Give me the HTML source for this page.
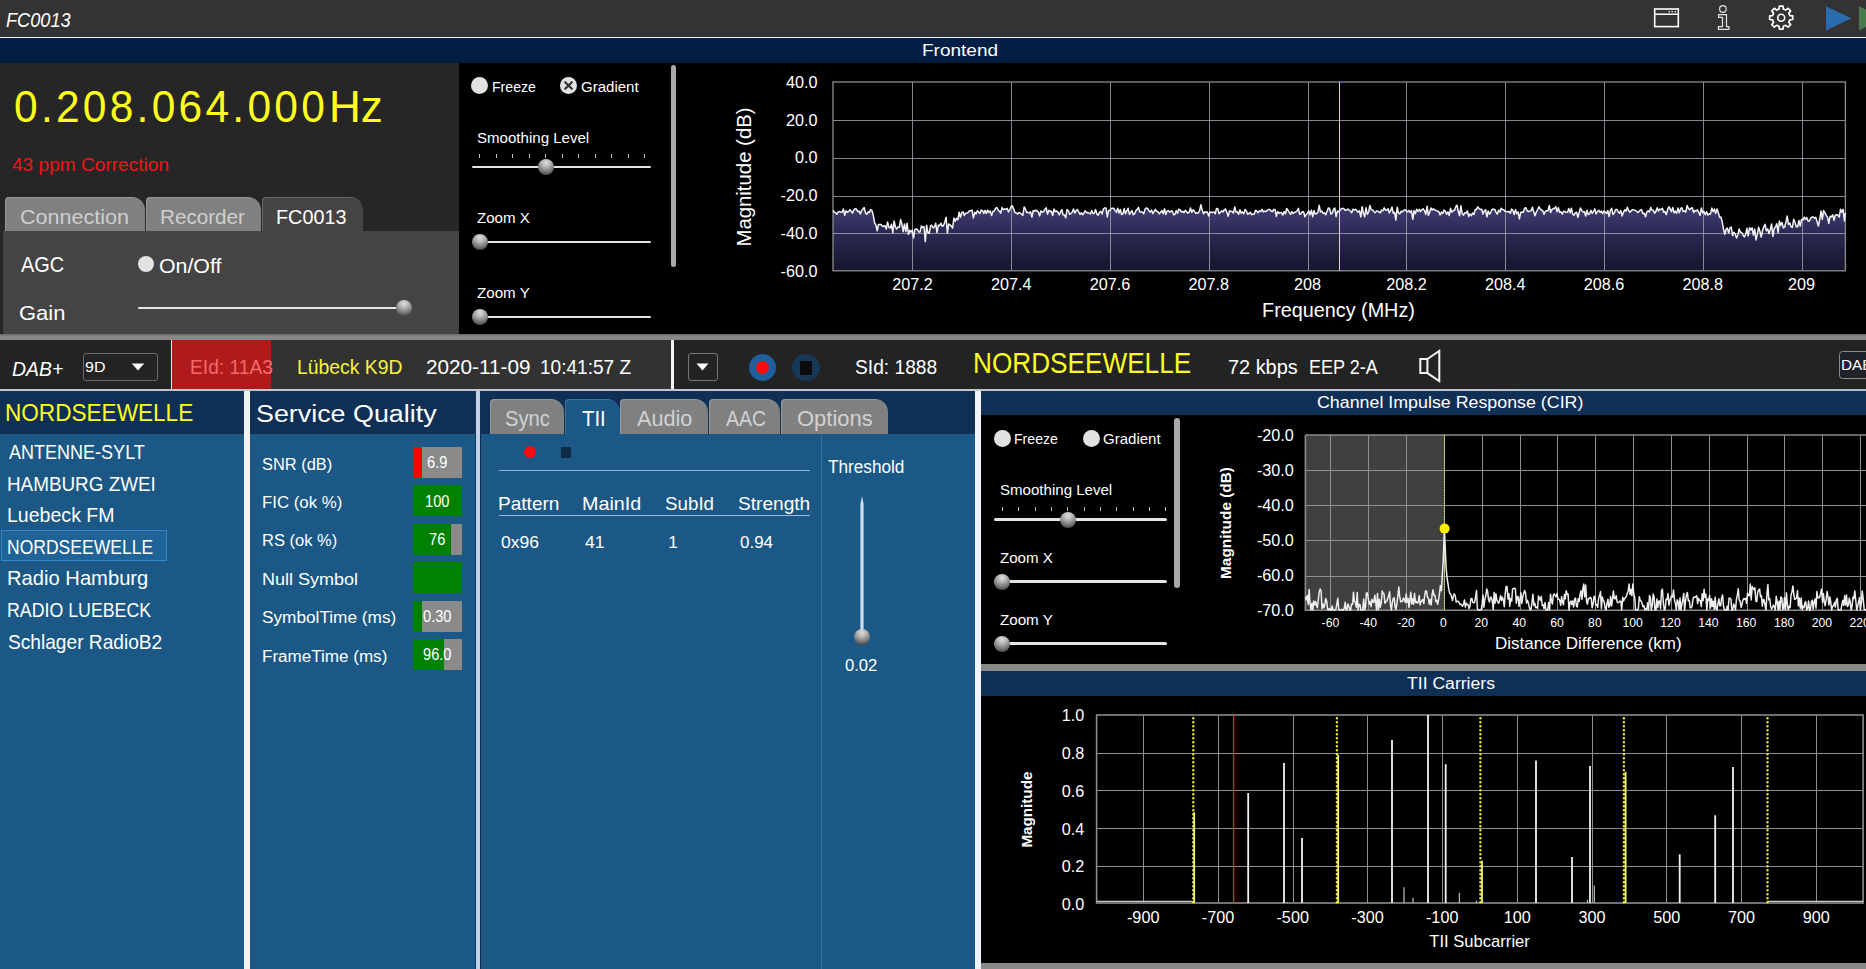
<!DOCTYPE html>
<html lang="en"><head><meta charset="utf-8"><title>FC0013 - DAB+ Receiver</title>
<style>
html,body{margin:0;padding:0;background:#1b5885;}
body{width:1866px;height:969px;position:relative;overflow:hidden;font-family:"Liberation Sans",sans-serif;color:#fff;}
.p{position:absolute;overflow:hidden;}
.b{position:absolute;}
.b svg{display:block;}
.t{position:absolute;white-space:pre;line-height:1;transform-origin:0 50%;color:#fff;}
svg{position:absolute;overflow:hidden;}
svg text{font-family:"Liberation Sans",sans-serif;fill:#fff;}
.tab{position:absolute;background:#808080;border-radius:4px 13px 0 0;box-shadow:inset 1px 1px 0 rgba(255,255,255,.18);}
</style></head><body>

<header class="p" style="left:0;top:0;width:1866px;height:37px;background:#333333">
<span class="t" style="left:6.45px;top:10.00px;font-size:20.25px;transform:scaleX(0.8979);font-style:italic">FC0013</span>
<svg style="left:1650px;top:4px" width="216" height="30" viewBox="1650 4 216 30" fill="none" stroke="#fff">
<rect x="1654.7" y="9" width="23.6" height="17.6" stroke-width="1.6"/>
<path d="M1655 14.2H1678" stroke-width="1.5"/><path d="M1668.5 11.6h1.4M1671.5 11.6h1.4M1674.5 11.6h1.4" stroke-width="1.3"/>
<circle cx="1722.9" cy="9" r="3.3" stroke-width="1.2" stroke="#e4e4e4"/>
<path d="M1718.6 14.6H1726.5V26.6H1729V29.3H1718.4V26.6H1722.5V17.4H1718.6Z" stroke-width="1.2" stroke="#e4e4e4" stroke-linejoin="round"/>
<circle cx="1781.2" cy="17.7" r="3.5" stroke-width="1.6"/>
<path id="gear" stroke-width="1.7" stroke-linejoin="round" d="M1779.38 6.19 L1783.02 6.19 L1783.35 9.06 L1785.79 10.08 L1788.05 8.27 L1790.63 10.85 L1788.82 13.11 L1789.84 15.55 L1792.71 15.88 L1792.71 19.52 L1789.84 19.85 L1788.82 22.29 L1790.63 24.55 L1788.05 27.13 L1785.79 25.32 L1783.35 26.34 L1783.02 29.21 L1779.38 29.21 L1779.05 26.34 L1776.61 25.32 L1774.35 27.13 L1771.77 24.55 L1773.58 22.29 L1772.56 19.85 L1769.69 19.52 L1769.69 15.88 L1772.56 15.55 L1773.58 13.11 L1771.77 10.85 L1774.35 8.27 L1776.61 10.08 L1779.05 9.06Z"/>
<path d="M1826 6.3 L1851.5 18.3 L1826 30.4Z" fill="#2a6cb0" stroke="none"/>
<path d="M1859 6.3 L1884.5 18.3 L1859 30.4Z" fill="#4b7a4f" stroke="none"/>
</svg>
</header>
<div class="b" style="left:0.00px;top:37.00px;width:1866.00px;height:1.00px;background:#f4f8ff"></div>
<div class="p" style="left:0;top:38px;width:1866px;height:25px;background:linear-gradient(#022148,#021c3f)">
<span class="t" style="left:922.18px;top:4.00px;font-size:17.25px;transform:scaleX(1.1008)">Frontend</span>
</div>
<section class="p" style="left:0;top:63px;width:459px;height:271px;background:#262626">
<span class="t" style="left:14.01px;top:21px;font-size:45.00px;letter-spacing:3.43px;color:#ffff1e;transform:scaleX(0.945)">0.208.064.000</span>
<span class="t" style="left:329.48px;top:21.00px;font-size:45.00px;transform:scaleX(0.9786);color:#ffff1e">Hz</span>
<span class="t" style="left:12.12px;top:93.00px;font-size:18.25px;transform:scaleX(1.0461);color:#f01418">43 ppm Correction</span>
<div class="tab" style="left:5px;top:134px;width:139.5px;height:34px"></div>
<div class="tab" style="left:146px;top:134px;width:114.5px;height:34px"></div>
<div class="tab" style="left:262px;top:134px;width:101px;height:34px;background:#444444"></div>
<span class="t" style="left:20.42px;top:143.00px;font-size:21.00px;transform:scaleX(1.0245);color:#cfcfcf">Connection</span>
<span class="t" style="left:160.35px;top:143.00px;font-size:21.00px;transform:scaleX(0.9832);color:#cfcfcf">Recorder</span>
<span class="t" style="left:276.42px;top:143.00px;font-size:21.00px;transform:scaleX(0.9427)">FC0013</span>
<div class="b" style="left:3.00px;top:168.00px;width:456.00px;height:103.00px;background:#444444"></div>
<span class="t" style="left:20.50px;top:191.00px;font-size:21.75px;transform:scaleX(0.9174)">AGC</span>
<div class="b" style="left:137.75px;top:192.75px;width:16.50px;height:16.50px;background:#e2e2e2;border-radius:50%"></div>
<span class="t" style="left:158.54px;top:192.00px;font-size:21.00px;transform:scaleX(1.0151)">On/Off</span>
<span class="t" style="left:19.40px;top:239.00px;font-size:21.00px;transform:scaleX(1.0476)">Gain</span>
<div class="b" style="left:138.00px;top:243.55px;width:266.00px;height:2.90px;background:#e4e4e4;border-radius:2px"></div><div class="b thumb" style="left:396.00px;top:237.00px;width:16.00px;height:16.00px;background:radial-gradient(circle at 50% 22%,#dedede 0%,#b6b6b6 30%,#808080 58%,#4a4a4a 84%,#343434 100%);border-radius:50%"></div>
</section>
<section class="p" style="left:459px;top:63px;width:1407px;height:271px;background:#000">
<div class="b" style="left:12.00px;top:14.10px;width:17.00px;height:17.00px;background:#e2e2e2;border-radius:50%"></div>
<span class="t" style="left:32.87px;top:16.00px;font-size:15.00px;transform:scaleX(0.9409)">Freeze</span>
<div class="b" style="left:101.00px;top:14.10px;width:17.00px;height:17.00px;background:#e2e2e2;border-radius:50%"><svg width="17" height="17" viewBox="0 0 17 17"><path d="M5.2 5.2 L11.8 11.8 M11.8 5.2 L5.2 11.8" stroke="#333" stroke-width="2.2" stroke-linecap="round" fill="none"/></svg></div>
<span class="t" style="left:122.25px;top:16.00px;font-size:15.00px;transform:scaleX(1.0018)">Gradient</span>
<span class="t" style="left:17.82px;top:67.00px;font-size:15.00px;transform:scaleX(1.0043)">Smoothing Level</span>
<div class="b" style="left:20.00px;top:91.00px;width:1.00px;height:4.00px;background:#bdbdbd"></div><div class="b" style="left:36.50px;top:91.00px;width:1.00px;height:4.00px;background:#bdbdbd"></div><div class="b" style="left:53.00px;top:91.00px;width:1.00px;height:4.00px;background:#bdbdbd"></div><div class="b" style="left:69.50px;top:91.00px;width:1.00px;height:4.00px;background:#bdbdbd"></div><div class="b" style="left:86.00px;top:91.00px;width:1.00px;height:4.00px;background:#bdbdbd"></div><div class="b" style="left:102.50px;top:91.00px;width:1.00px;height:4.00px;background:#bdbdbd"></div><div class="b" style="left:119.00px;top:91.00px;width:1.00px;height:4.00px;background:#bdbdbd"></div><div class="b" style="left:135.50px;top:91.00px;width:1.00px;height:4.00px;background:#bdbdbd"></div><div class="b" style="left:152.00px;top:91.00px;width:1.00px;height:4.00px;background:#bdbdbd"></div><div class="b" style="left:168.50px;top:91.00px;width:1.00px;height:4.00px;background:#bdbdbd"></div><div class="b" style="left:185.00px;top:91.00px;width:1.00px;height:4.00px;background:#bdbdbd"></div><div class="b" style="left:13.00px;top:102.55px;width:178.50px;height:2.90px;background:#e4e4e4;border-radius:2px"></div><div class="b thumb" style="left:78.70px;top:96.00px;width:16.00px;height:16.00px;background:radial-gradient(circle at 50% 22%,#dedede 0%,#b6b6b6 30%,#808080 58%,#4a4a4a 84%,#343434 100%);border-radius:50%"></div>
<span class="t" style="left:18.05px;top:147.00px;font-size:15.00px;transform:scaleX(1.0048)">Zoom X</span>
<div class="b" style="left:13.00px;top:177.55px;width:178.50px;height:2.90px;background:#e4e4e4;border-radius:2px"></div><div class="b thumb" style="left:13.00px;top:171.00px;width:16.00px;height:16.00px;background:radial-gradient(circle at 50% 22%,#dedede 0%,#b6b6b6 30%,#808080 58%,#4a4a4a 84%,#343434 100%);border-radius:50%"></div>
<span class="t" style="left:18.05px;top:222.00px;font-size:15.00px;transform:scaleX(1.0107)">Zoom Y</span>
<div class="b" style="left:13.00px;top:252.55px;width:178.50px;height:2.90px;background:#e4e4e4;border-radius:2px"></div><div class="b thumb" style="left:13.00px;top:246.00px;width:16.00px;height:16.00px;background:radial-gradient(circle at 50% 22%,#dedede 0%,#b6b6b6 30%,#808080 58%,#4a4a4a 84%,#343434 100%);border-radius:50%"></div>
<div class="b" style="left:211.50px;top:1.50px;width:5.50px;height:202.50px;background:#a9a9a9;border-radius:3px"></div>
<svg style="left:221px;top:0" width="1186" height="271" viewBox="680 63 1186 271">
<defs><linearGradient id="sg" gradientUnits="userSpaceOnUse" x1="0" y1="200" x2="0" y2="271"><stop offset="0" stop-color="#45437a"/><stop offset="0.45" stop-color="#2b2a55"/><stop offset="1" stop-color="#15152c"/></linearGradient></defs>
<path d="M833.0,270.8 L833.0,210.4 L834.3,212.2 L835.6,212.9 L836.9,214.2 L838.2,211.9 L839.5,211.4 L840.8,212.2 L842.1,212.1 L843.4,209.0 L844.7,215.4 L846.0,210.7 L847.3,212.2 L848.6,211.6 L849.9,209.7 L851.2,211.2 L852.5,213.1 L853.8,210.0 L855.1,208.8 L856.4,209.1 L857.7,211.6 L859.0,211.1 L860.3,214.0 L861.6,210.8 L862.9,209.1 L864.2,207.6 L865.5,212.9 L866.8,214.3 L868.1,211.8 L869.4,212.4 L870.7,209.6 L872.0,210.5 L873.3,215.4 L874.6,222.8 L875.9,225.0 L877.2,230.8 L878.5,224.5 L879.8,224.6 L881.1,224.5 L882.4,226.2 L883.7,226.2 L885.0,225.7 L886.3,229.1 L887.6,221.9 L888.9,227.4 L890.2,228.0 L891.5,224.3 L892.8,232.7 L894.1,221.0 L895.4,227.0 L896.7,229.2 L898.0,226.9 L899.3,227.3 L900.6,219.6 L901.9,223.8 L903.2,231.7 L904.5,223.9 L905.8,231.6 L907.1,223.2 L908.4,234.5 L909.7,230.3 L911.0,232.0 L912.3,230.1 L913.6,238.0 L914.9,229.4 L916.2,229.0 L917.5,229.5 L918.8,232.1 L920.1,231.9 L921.4,225.9 L922.7,227.4 L924.0,226.6 L925.3,241.8 L926.6,225.2 L927.9,232.6 L929.2,233.4 L930.5,225.8 L931.8,225.2 L933.1,228.0 L934.4,226.9 L935.7,223.3 L937.0,232.6 L938.3,225.3 L939.6,225.6 L940.9,223.2 L942.2,226.3 L943.5,225.5 L944.8,222.2 L946.1,217.2 L947.4,233.1 L948.7,224.0 L950.0,224.8 L951.3,226.1 L952.6,228.1 L953.9,218.1 L955.2,221.2 L956.5,218.4 L957.8,219.8 L959.1,212.2 L960.4,217.3 L961.7,212.6 L963.0,211.8 L964.3,215.4 L965.6,213.2 L966.9,213.0 L968.2,212.4 L969.5,210.7 L970.8,210.7 L972.1,210.1 L973.4,217.9 L974.7,212.3 L976.0,214.0 L977.3,210.7 L978.6,212.1 L979.9,213.4 L981.2,210.1 L982.5,210.7 L983.8,213.4 L985.1,210.4 L986.4,213.5 L987.7,210.1 L989.0,212.5 L990.3,210.9 L991.6,215.5 L992.9,211.5 L994.2,210.9 L995.5,208.4 L996.8,207.5 L998.1,209.9 L999.4,211.3 L1000.7,213.1 L1002.0,207.6 L1003.3,209.7 L1004.6,209.0 L1005.9,209.3 L1007.2,208.4 L1008.5,211.9 L1009.8,209.5 L1011.1,206.5 L1012.4,205.9 L1013.7,209.0 L1015.0,212.8 L1016.3,212.7 L1017.6,214.1 L1018.9,212.5 L1020.2,213.1 L1021.5,214.0 L1022.8,215.5 L1024.1,207.0 L1025.4,208.9 L1026.7,212.6 L1028.0,212.3 L1029.3,213.1 L1030.6,211.7 L1031.9,217.1 L1033.2,210.6 L1034.5,211.2 L1035.8,210.2 L1037.1,210.9 L1038.4,212.1 L1039.7,215.9 L1041.0,210.8 L1042.3,212.2 L1043.6,211.7 L1044.9,209.4 L1046.2,207.8 L1047.5,214.2 L1048.8,210.2 L1050.1,211.4 L1051.4,211.3 L1052.7,215.5 L1054.0,209.0 L1055.3,211.6 L1056.6,210.9 L1057.9,212.2 L1059.2,214.9 L1060.5,211.9 L1061.8,209.7 L1063.1,214.7 L1064.4,214.9 L1065.7,217.8 L1067.0,209.6 L1068.3,210.5 L1069.6,214.3 L1070.9,213.6 L1072.2,212.2 L1073.5,209.0 L1074.8,213.1 L1076.1,210.8 L1077.4,209.5 L1078.7,211.8 L1080.0,214.4 L1081.3,212.6 L1082.6,214.8 L1083.9,213.2 L1085.2,210.7 L1086.5,212.7 L1087.8,212.4 L1089.1,213.1 L1090.4,213.9 L1091.7,210.5 L1093.0,213.7 L1094.3,213.0 L1095.6,209.5 L1096.9,214.0 L1098.2,215.1 L1099.5,212.2 L1100.8,211.3 L1102.1,214.0 L1103.4,209.0 L1104.7,207.9 L1106.0,207.9 L1107.3,216.9 L1108.6,210.6 L1109.9,210.5 L1111.2,208.4 L1112.5,208.3 L1113.8,208.3 L1115.1,210.6 L1116.4,212.4 L1117.7,208.3 L1119.0,213.0 L1120.3,209.4 L1121.6,214.5 L1122.9,213.7 L1124.2,208.6 L1125.5,213.7 L1126.8,211.0 L1128.1,208.3 L1129.4,214.4 L1130.7,212.5 L1132.0,210.6 L1133.3,214.7 L1134.6,213.7 L1135.9,210.6 L1137.2,209.4 L1138.5,207.4 L1139.8,212.1 L1141.1,211.6 L1142.4,212.2 L1143.7,213.8 L1145.0,209.3 L1146.3,207.9 L1147.6,208.4 L1148.9,210.7 L1150.2,212.2 L1151.5,210.1 L1152.8,213.5 L1154.1,211.3 L1155.4,209.3 L1156.7,211.6 L1158.0,211.7 L1159.3,213.9 L1160.6,212.2 L1161.9,210.6 L1163.2,213.7 L1164.5,208.7 L1165.8,214.5 L1167.1,211.0 L1168.4,210.6 L1169.7,212.2 L1171.0,211.1 L1172.3,210.9 L1173.6,214.8 L1174.9,214.6 L1176.2,210.5 L1177.5,213.2 L1178.8,209.2 L1180.1,209.8 L1181.4,212.0 L1182.7,211.3 L1184.0,212.6 L1185.3,210.3 L1186.6,211.8 L1187.9,213.1 L1189.2,212.2 L1190.5,208.0 L1191.8,212.4 L1193.1,209.9 L1194.4,211.1 L1195.7,213.4 L1197.0,212.8 L1198.3,212.9 L1199.6,210.6 L1200.9,204.7 L1202.2,210.1 L1203.5,213.8 L1204.8,211.8 L1206.1,212.3 L1207.4,211.9 L1208.7,215.9 L1210.0,212.0 L1211.3,212.2 L1212.6,212.4 L1213.9,211.9 L1215.2,213.9 L1216.5,208.5 L1217.8,208.8 L1219.1,213.8 L1220.4,212.2 L1221.7,210.8 L1223.0,212.0 L1224.3,209.8 L1225.6,209.0 L1226.9,212.5 L1228.2,216.2 L1229.5,210.7 L1230.8,211.5 L1232.1,211.5 L1233.4,213.1 L1234.7,207.0 L1236.0,212.0 L1237.3,211.8 L1238.6,214.4 L1239.9,209.7 L1241.2,213.3 L1242.5,211.8 L1243.8,213.9 L1245.1,209.4 L1246.4,211.0 L1247.7,214.3 L1249.0,213.5 L1250.3,212.2 L1251.6,214.7 L1252.9,214.1 L1254.2,214.2 L1255.5,210.2 L1256.8,211.2 L1258.1,212.7 L1259.4,210.8 L1260.7,211.5 L1262.0,209.4 L1263.3,211.9 L1264.6,211.1 L1265.9,211.6 L1267.2,210.4 L1268.5,209.6 L1269.8,209.4 L1271.1,211.0 L1272.4,211.7 L1273.7,209.5 L1275.0,209.4 L1276.3,216.4 L1277.6,211.4 L1278.9,213.4 L1280.2,212.4 L1281.5,212.8 L1282.8,215.0 L1284.1,211.6 L1285.4,213.8 L1286.7,208.5 L1288.0,210.3 L1289.3,212.3 L1290.6,214.3 L1291.9,211.7 L1293.2,213.4 L1294.5,212.2 L1295.8,212.1 L1297.1,210.7 L1298.4,208.3 L1299.7,214.3 L1301.0,213.5 L1302.3,211.8 L1303.6,211.8 L1304.9,216.7 L1306.2,214.6 L1307.5,213.0 L1308.8,210.8 L1310.1,214.8 L1311.4,210.2 L1312.7,216.7 L1314.0,210.6 L1315.3,214.1 L1316.6,213.8 L1317.9,212.3 L1319.2,205.3 L1320.5,211.9 L1321.8,211.0 L1323.1,213.4 L1324.4,212.7 L1325.7,214.8 L1327.0,211.4 L1328.3,207.9 L1329.6,208.4 L1330.9,214.1 L1332.2,213.2 L1333.5,209.3 L1334.8,208.0 L1336.1,216.7 L1337.4,210.9 L1338.7,212.0 L1340.0,210.4 L1341.3,208.6 L1342.6,208.5 L1343.9,208.6 L1345.2,210.4 L1346.5,210.0 L1347.8,209.0 L1349.1,210.1 L1350.4,211.0 L1351.7,212.7 L1353.0,209.2 L1354.3,210.0 L1355.6,209.3 L1356.9,210.9 L1358.2,212.1 L1359.5,210.9 L1360.8,216.9 L1362.1,206.7 L1363.4,213.3 L1364.7,216.7 L1366.0,207.8 L1367.3,214.3 L1368.6,212.0 L1369.9,205.5 L1371.2,209.8 L1372.5,209.9 L1373.8,211.5 L1375.1,212.7 L1376.4,211.1 L1377.7,211.3 L1379.0,211.8 L1380.3,212.8 L1381.6,210.2 L1382.9,210.8 L1384.2,207.9 L1385.5,210.0 L1386.8,210.2 L1388.1,208.8 L1389.4,212.9 L1390.7,210.4 L1392.0,207.0 L1393.3,213.3 L1394.6,212.2 L1395.9,220.1 L1397.2,207.2 L1398.5,213.0 L1399.8,213.9 L1401.1,211.3 L1402.4,211.8 L1403.7,210.5 L1405.0,209.7 L1406.3,211.0 L1407.6,212.0 L1408.9,210.5 L1410.2,212.5 L1411.5,210.7 L1412.8,219.3 L1414.1,210.6 L1415.4,213.6 L1416.7,209.2 L1418.0,211.4 L1419.3,209.4 L1420.6,211.7 L1421.9,209.7 L1423.2,208.8 L1424.5,210.7 L1425.8,214.5 L1427.1,206.2 L1428.4,215.3 L1429.7,212.0 L1431.0,207.9 L1432.3,210.0 L1433.6,208.9 L1434.9,209.8 L1436.2,210.5 L1437.5,211.2 L1438.8,211.4 L1440.1,214.9 L1441.4,212.1 L1442.7,213.4 L1444.0,210.1 L1445.3,211.4 L1446.6,214.2 L1447.9,211.8 L1449.2,215.5 L1450.5,208.3 L1451.8,212.2 L1453.1,210.6 L1454.4,210.5 L1455.7,206.8 L1457.0,205.2 L1458.3,211.3 L1459.6,215.7 L1460.9,205.8 L1462.2,213.7 L1463.5,215.1 L1464.8,212.7 L1466.1,213.1 L1467.4,210.8 L1468.7,216.5 L1470.0,213.9 L1471.3,215.6 L1472.6,213.0 L1473.9,214.5 L1475.2,209.6 L1476.5,209.4 L1477.8,206.8 L1479.1,208.7 L1480.4,209.4 L1481.7,209.3 L1483.0,214.0 L1484.3,210.8 L1485.6,209.7 L1486.9,216.8 L1488.2,210.9 L1489.5,214.3 L1490.8,212.1 L1492.1,209.3 L1493.4,209.2 L1494.7,209.4 L1496.0,212.1 L1497.3,214.2 L1498.6,210.3 L1499.9,211.9 L1501.2,208.3 L1502.5,209.5 L1503.8,209.8 L1505.1,211.2 L1506.4,211.6 L1507.7,211.8 L1509.0,211.5 L1510.3,213.3 L1511.6,209.0 L1512.9,210.2 L1514.2,214.5 L1515.5,209.6 L1516.8,213.7 L1518.1,211.8 L1519.4,218.9 L1520.7,212.4 L1522.0,212.0 L1523.3,212.2 L1524.6,208.3 L1525.9,207.7 L1527.2,210.8 L1528.5,211.7 L1529.8,210.9 L1531.1,210.7 L1532.4,207.3 L1533.7,211.8 L1535.0,215.7 L1536.3,212.0 L1537.6,209.5 L1538.9,206.8 L1540.2,208.7 L1541.5,210.2 L1542.8,210.7 L1544.1,214.3 L1545.4,211.3 L1546.7,210.7 L1548.0,210.8 L1549.3,205.5 L1550.6,212.5 L1551.9,209.6 L1553.2,208.6 L1554.5,208.4 L1555.8,206.7 L1557.1,211.8 L1558.4,207.6 L1559.7,212.4 L1561.0,211.8 L1562.3,214.1 L1563.6,211.3 L1564.9,211.4 L1566.2,212.5 L1567.5,212.1 L1568.8,208.6 L1570.1,212.7 L1571.4,208.2 L1572.7,214.2 L1574.0,215.2 L1575.3,212.9 L1576.6,212.2 L1577.9,217.4 L1579.2,212.2 L1580.5,208.0 L1581.8,210.8 L1583.1,212.0 L1584.4,211.6 L1585.7,216.0 L1587.0,210.3 L1588.3,214.6 L1589.6,213.7 L1590.9,210.4 L1592.2,213.3 L1593.5,211.5 L1594.8,208.9 L1596.1,213.9 L1597.4,211.7 L1598.7,210.2 L1600.0,212.5 L1601.3,211.0 L1602.6,213.7 L1603.9,211.1 L1605.2,212.1 L1606.5,213.5 L1607.8,210.6 L1609.1,216.5 L1610.4,210.2 L1611.7,208.4 L1613.0,214.5 L1614.3,213.0 L1615.6,209.5 L1616.9,209.4 L1618.2,211.8 L1619.5,213.2 L1620.8,210.6 L1622.1,215.9 L1623.4,212.3 L1624.7,209.9 L1626.0,211.1 L1627.3,207.2 L1628.6,210.4 L1629.9,212.2 L1631.2,210.9 L1632.5,209.6 L1633.8,210.0 L1635.1,210.4 L1636.4,211.1 L1637.7,212.5 L1639.0,211.7 L1640.3,209.9 L1641.6,209.7 L1642.9,213.5 L1644.2,213.3 L1645.5,216.8 L1646.8,212.0 L1648.1,210.8 L1649.4,212.0 L1650.7,207.4 L1652.0,210.3 L1653.3,210.2 L1654.6,213.3 L1655.9,211.5 L1657.2,207.7 L1658.5,211.0 L1659.8,209.1 L1661.1,209.6 L1662.4,208.3 L1663.7,212.3 L1665.0,211.5 L1666.3,214.6 L1667.6,209.6 L1668.9,206.7 L1670.2,209.1 L1671.5,211.6 L1672.8,207.5 L1674.1,212.9 L1675.4,211.0 L1676.7,213.4 L1678.0,208.1 L1679.3,212.9 L1680.6,208.7 L1681.9,207.7 L1683.2,211.6 L1684.5,210.9 L1685.8,212.1 L1687.1,205.6 L1688.4,208.4 L1689.7,209.7 L1691.0,208.2 L1692.3,207.7 L1693.6,212.5 L1694.9,210.5 L1696.2,211.1 L1697.5,209.8 L1698.8,212.7 L1700.1,215.3 L1701.4,207.9 L1702.7,212.7 L1704.0,211.6 L1705.3,214.7 L1706.6,211.8 L1707.9,215.1 L1709.2,213.7 L1710.5,213.9 L1711.8,208.1 L1713.1,211.6 L1714.4,209.0 L1715.7,213.6 L1717.0,209.1 L1718.3,212.5 L1719.6,217.4 L1720.9,217.0 L1722.2,221.8 L1723.5,229.3 L1724.8,234.4 L1726.1,229.3 L1727.4,228.1 L1728.7,233.1 L1730.0,227.9 L1731.3,227.0 L1732.6,235.7 L1733.9,232.2 L1735.2,234.1 L1736.5,238.0 L1737.8,235.0 L1739.1,229.0 L1740.4,232.1 L1741.7,232.6 L1743.0,235.0 L1744.3,236.9 L1745.6,234.6 L1746.9,228.3 L1748.2,236.0 L1749.5,227.8 L1750.8,230.2 L1752.1,227.9 L1753.4,235.0 L1754.7,229.1 L1756.0,239.9 L1757.3,234.5 L1758.6,227.3 L1759.9,231.2 L1761.2,237.1 L1762.5,230.6 L1763.8,226.9 L1765.1,224.3 L1766.4,230.8 L1767.7,228.9 L1769.0,233.5 L1770.3,229.5 L1771.6,223.9 L1772.9,236.4 L1774.2,228.6 L1775.5,227.1 L1776.8,223.8 L1778.1,232.6 L1779.4,221.1 L1780.7,225.5 L1782.0,222.4 L1783.3,227.9 L1784.6,227.2 L1785.9,222.3 L1787.2,216.0 L1788.5,224.4 L1789.8,223.1 L1791.1,226.8 L1792.4,227.2 L1793.7,219.3 L1795.0,222.3 L1796.3,226.8 L1797.6,226.8 L1798.9,220.4 L1800.2,226.1 L1801.5,219.5 L1802.8,220.2 L1804.1,217.2 L1805.4,219.3 L1806.7,217.6 L1808.0,221.0 L1809.3,221.1 L1810.6,218.2 L1811.9,217.1 L1813.2,217.1 L1814.5,218.2 L1815.8,217.4 L1817.1,221.8 L1818.4,226.0 L1819.7,219.5 L1821.0,211.1 L1822.3,219.2 L1823.6,210.6 L1824.9,212.6 L1826.2,215.3 L1827.5,217.2 L1828.8,223.3 L1830.1,216.3 L1831.4,216.9 L1832.7,214.9 L1834.0,220.2 L1835.3,215.3 L1836.6,214.8 L1837.9,215.1 L1839.2,217.2 L1840.5,209.3 L1841.8,212.3 L1843.1,209.4 L1844.4,220.9 L1845.4,213.0 L1845.4,270.8 Z" fill="url(#sg)"/>
<path d="M833.0 120.5H1845.4M833.0 158.5H1845.4M833.0 196.5H1845.4M833.0 233.5H1845.4M912.5 82.0V270.8M1011.5 82.0V270.8M1110.5 82.0V270.8M1209.5 82.0V270.8M1308.5 82.0V270.8M1406.5 82.0V270.8M1505.5 82.0V270.8M1604.5 82.0V270.8M1703.5 82.0V270.8M1802.5 82.0V270.8" stroke="#9c9caa" stroke-width="1" fill="none" opacity=".85"/>
<rect x="833.0" y="82.0" width="1012.4" height="188.8" fill="none" stroke="#8c8c8c" stroke-width="1.3"/>
<path d="M1339.5 82.0V270.8" stroke="#e6e64a" stroke-width="1"/>
<polyline points="833.0,210.4 834.3,212.2 835.6,212.9 836.9,214.2 838.2,211.9 839.5,211.4 840.8,212.2 842.1,212.1 843.4,209.0 844.7,215.4 846.0,210.7 847.3,212.2 848.6,211.6 849.9,209.7 851.2,211.2 852.5,213.1 853.8,210.0 855.1,208.8 856.4,209.1 857.7,211.6 859.0,211.1 860.3,214.0 861.6,210.8 862.9,209.1 864.2,207.6 865.5,212.9 866.8,214.3 868.1,211.8 869.4,212.4 870.7,209.6 872.0,210.5 873.3,215.4 874.6,222.8 875.9,225.0 877.2,230.8 878.5,224.5 879.8,224.6 881.1,224.5 882.4,226.2 883.7,226.2 885.0,225.7 886.3,229.1 887.6,221.9 888.9,227.4 890.2,228.0 891.5,224.3 892.8,232.7 894.1,221.0 895.4,227.0 896.7,229.2 898.0,226.9 899.3,227.3 900.6,219.6 901.9,223.8 903.2,231.7 904.5,223.9 905.8,231.6 907.1,223.2 908.4,234.5 909.7,230.3 911.0,232.0 912.3,230.1 913.6,238.0 914.9,229.4 916.2,229.0 917.5,229.5 918.8,232.1 920.1,231.9 921.4,225.9 922.7,227.4 924.0,226.6 925.3,241.8 926.6,225.2 927.9,232.6 929.2,233.4 930.5,225.8 931.8,225.2 933.1,228.0 934.4,226.9 935.7,223.3 937.0,232.6 938.3,225.3 939.6,225.6 940.9,223.2 942.2,226.3 943.5,225.5 944.8,222.2 946.1,217.2 947.4,233.1 948.7,224.0 950.0,224.8 951.3,226.1 952.6,228.1 953.9,218.1 955.2,221.2 956.5,218.4 957.8,219.8 959.1,212.2 960.4,217.3 961.7,212.6 963.0,211.8 964.3,215.4 965.6,213.2 966.9,213.0 968.2,212.4 969.5,210.7 970.8,210.7 972.1,210.1 973.4,217.9 974.7,212.3 976.0,214.0 977.3,210.7 978.6,212.1 979.9,213.4 981.2,210.1 982.5,210.7 983.8,213.4 985.1,210.4 986.4,213.5 987.7,210.1 989.0,212.5 990.3,210.9 991.6,215.5 992.9,211.5 994.2,210.9 995.5,208.4 996.8,207.5 998.1,209.9 999.4,211.3 1000.7,213.1 1002.0,207.6 1003.3,209.7 1004.6,209.0 1005.9,209.3 1007.2,208.4 1008.5,211.9 1009.8,209.5 1011.1,206.5 1012.4,205.9 1013.7,209.0 1015.0,212.8 1016.3,212.7 1017.6,214.1 1018.9,212.5 1020.2,213.1 1021.5,214.0 1022.8,215.5 1024.1,207.0 1025.4,208.9 1026.7,212.6 1028.0,212.3 1029.3,213.1 1030.6,211.7 1031.9,217.1 1033.2,210.6 1034.5,211.2 1035.8,210.2 1037.1,210.9 1038.4,212.1 1039.7,215.9 1041.0,210.8 1042.3,212.2 1043.6,211.7 1044.9,209.4 1046.2,207.8 1047.5,214.2 1048.8,210.2 1050.1,211.4 1051.4,211.3 1052.7,215.5 1054.0,209.0 1055.3,211.6 1056.6,210.9 1057.9,212.2 1059.2,214.9 1060.5,211.9 1061.8,209.7 1063.1,214.7 1064.4,214.9 1065.7,217.8 1067.0,209.6 1068.3,210.5 1069.6,214.3 1070.9,213.6 1072.2,212.2 1073.5,209.0 1074.8,213.1 1076.1,210.8 1077.4,209.5 1078.7,211.8 1080.0,214.4 1081.3,212.6 1082.6,214.8 1083.9,213.2 1085.2,210.7 1086.5,212.7 1087.8,212.4 1089.1,213.1 1090.4,213.9 1091.7,210.5 1093.0,213.7 1094.3,213.0 1095.6,209.5 1096.9,214.0 1098.2,215.1 1099.5,212.2 1100.8,211.3 1102.1,214.0 1103.4,209.0 1104.7,207.9 1106.0,207.9 1107.3,216.9 1108.6,210.6 1109.9,210.5 1111.2,208.4 1112.5,208.3 1113.8,208.3 1115.1,210.6 1116.4,212.4 1117.7,208.3 1119.0,213.0 1120.3,209.4 1121.6,214.5 1122.9,213.7 1124.2,208.6 1125.5,213.7 1126.8,211.0 1128.1,208.3 1129.4,214.4 1130.7,212.5 1132.0,210.6 1133.3,214.7 1134.6,213.7 1135.9,210.6 1137.2,209.4 1138.5,207.4 1139.8,212.1 1141.1,211.6 1142.4,212.2 1143.7,213.8 1145.0,209.3 1146.3,207.9 1147.6,208.4 1148.9,210.7 1150.2,212.2 1151.5,210.1 1152.8,213.5 1154.1,211.3 1155.4,209.3 1156.7,211.6 1158.0,211.7 1159.3,213.9 1160.6,212.2 1161.9,210.6 1163.2,213.7 1164.5,208.7 1165.8,214.5 1167.1,211.0 1168.4,210.6 1169.7,212.2 1171.0,211.1 1172.3,210.9 1173.6,214.8 1174.9,214.6 1176.2,210.5 1177.5,213.2 1178.8,209.2 1180.1,209.8 1181.4,212.0 1182.7,211.3 1184.0,212.6 1185.3,210.3 1186.6,211.8 1187.9,213.1 1189.2,212.2 1190.5,208.0 1191.8,212.4 1193.1,209.9 1194.4,211.1 1195.7,213.4 1197.0,212.8 1198.3,212.9 1199.6,210.6 1200.9,204.7 1202.2,210.1 1203.5,213.8 1204.8,211.8 1206.1,212.3 1207.4,211.9 1208.7,215.9 1210.0,212.0 1211.3,212.2 1212.6,212.4 1213.9,211.9 1215.2,213.9 1216.5,208.5 1217.8,208.8 1219.1,213.8 1220.4,212.2 1221.7,210.8 1223.0,212.0 1224.3,209.8 1225.6,209.0 1226.9,212.5 1228.2,216.2 1229.5,210.7 1230.8,211.5 1232.1,211.5 1233.4,213.1 1234.7,207.0 1236.0,212.0 1237.3,211.8 1238.6,214.4 1239.9,209.7 1241.2,213.3 1242.5,211.8 1243.8,213.9 1245.1,209.4 1246.4,211.0 1247.7,214.3 1249.0,213.5 1250.3,212.2 1251.6,214.7 1252.9,214.1 1254.2,214.2 1255.5,210.2 1256.8,211.2 1258.1,212.7 1259.4,210.8 1260.7,211.5 1262.0,209.4 1263.3,211.9 1264.6,211.1 1265.9,211.6 1267.2,210.4 1268.5,209.6 1269.8,209.4 1271.1,211.0 1272.4,211.7 1273.7,209.5 1275.0,209.4 1276.3,216.4 1277.6,211.4 1278.9,213.4 1280.2,212.4 1281.5,212.8 1282.8,215.0 1284.1,211.6 1285.4,213.8 1286.7,208.5 1288.0,210.3 1289.3,212.3 1290.6,214.3 1291.9,211.7 1293.2,213.4 1294.5,212.2 1295.8,212.1 1297.1,210.7 1298.4,208.3 1299.7,214.3 1301.0,213.5 1302.3,211.8 1303.6,211.8 1304.9,216.7 1306.2,214.6 1307.5,213.0 1308.8,210.8 1310.1,214.8 1311.4,210.2 1312.7,216.7 1314.0,210.6 1315.3,214.1 1316.6,213.8 1317.9,212.3 1319.2,205.3 1320.5,211.9 1321.8,211.0 1323.1,213.4 1324.4,212.7 1325.7,214.8 1327.0,211.4 1328.3,207.9 1329.6,208.4 1330.9,214.1 1332.2,213.2 1333.5,209.3 1334.8,208.0 1336.1,216.7 1337.4,210.9 1338.7,212.0 1340.0,210.4 1341.3,208.6 1342.6,208.5 1343.9,208.6 1345.2,210.4 1346.5,210.0 1347.8,209.0 1349.1,210.1 1350.4,211.0 1351.7,212.7 1353.0,209.2 1354.3,210.0 1355.6,209.3 1356.9,210.9 1358.2,212.1 1359.5,210.9 1360.8,216.9 1362.1,206.7 1363.4,213.3 1364.7,216.7 1366.0,207.8 1367.3,214.3 1368.6,212.0 1369.9,205.5 1371.2,209.8 1372.5,209.9 1373.8,211.5 1375.1,212.7 1376.4,211.1 1377.7,211.3 1379.0,211.8 1380.3,212.8 1381.6,210.2 1382.9,210.8 1384.2,207.9 1385.5,210.0 1386.8,210.2 1388.1,208.8 1389.4,212.9 1390.7,210.4 1392.0,207.0 1393.3,213.3 1394.6,212.2 1395.9,220.1 1397.2,207.2 1398.5,213.0 1399.8,213.9 1401.1,211.3 1402.4,211.8 1403.7,210.5 1405.0,209.7 1406.3,211.0 1407.6,212.0 1408.9,210.5 1410.2,212.5 1411.5,210.7 1412.8,219.3 1414.1,210.6 1415.4,213.6 1416.7,209.2 1418.0,211.4 1419.3,209.4 1420.6,211.7 1421.9,209.7 1423.2,208.8 1424.5,210.7 1425.8,214.5 1427.1,206.2 1428.4,215.3 1429.7,212.0 1431.0,207.9 1432.3,210.0 1433.6,208.9 1434.9,209.8 1436.2,210.5 1437.5,211.2 1438.8,211.4 1440.1,214.9 1441.4,212.1 1442.7,213.4 1444.0,210.1 1445.3,211.4 1446.6,214.2 1447.9,211.8 1449.2,215.5 1450.5,208.3 1451.8,212.2 1453.1,210.6 1454.4,210.5 1455.7,206.8 1457.0,205.2 1458.3,211.3 1459.6,215.7 1460.9,205.8 1462.2,213.7 1463.5,215.1 1464.8,212.7 1466.1,213.1 1467.4,210.8 1468.7,216.5 1470.0,213.9 1471.3,215.6 1472.6,213.0 1473.9,214.5 1475.2,209.6 1476.5,209.4 1477.8,206.8 1479.1,208.7 1480.4,209.4 1481.7,209.3 1483.0,214.0 1484.3,210.8 1485.6,209.7 1486.9,216.8 1488.2,210.9 1489.5,214.3 1490.8,212.1 1492.1,209.3 1493.4,209.2 1494.7,209.4 1496.0,212.1 1497.3,214.2 1498.6,210.3 1499.9,211.9 1501.2,208.3 1502.5,209.5 1503.8,209.8 1505.1,211.2 1506.4,211.6 1507.7,211.8 1509.0,211.5 1510.3,213.3 1511.6,209.0 1512.9,210.2 1514.2,214.5 1515.5,209.6 1516.8,213.7 1518.1,211.8 1519.4,218.9 1520.7,212.4 1522.0,212.0 1523.3,212.2 1524.6,208.3 1525.9,207.7 1527.2,210.8 1528.5,211.7 1529.8,210.9 1531.1,210.7 1532.4,207.3 1533.7,211.8 1535.0,215.7 1536.3,212.0 1537.6,209.5 1538.9,206.8 1540.2,208.7 1541.5,210.2 1542.8,210.7 1544.1,214.3 1545.4,211.3 1546.7,210.7 1548.0,210.8 1549.3,205.5 1550.6,212.5 1551.9,209.6 1553.2,208.6 1554.5,208.4 1555.8,206.7 1557.1,211.8 1558.4,207.6 1559.7,212.4 1561.0,211.8 1562.3,214.1 1563.6,211.3 1564.9,211.4 1566.2,212.5 1567.5,212.1 1568.8,208.6 1570.1,212.7 1571.4,208.2 1572.7,214.2 1574.0,215.2 1575.3,212.9 1576.6,212.2 1577.9,217.4 1579.2,212.2 1580.5,208.0 1581.8,210.8 1583.1,212.0 1584.4,211.6 1585.7,216.0 1587.0,210.3 1588.3,214.6 1589.6,213.7 1590.9,210.4 1592.2,213.3 1593.5,211.5 1594.8,208.9 1596.1,213.9 1597.4,211.7 1598.7,210.2 1600.0,212.5 1601.3,211.0 1602.6,213.7 1603.9,211.1 1605.2,212.1 1606.5,213.5 1607.8,210.6 1609.1,216.5 1610.4,210.2 1611.7,208.4 1613.0,214.5 1614.3,213.0 1615.6,209.5 1616.9,209.4 1618.2,211.8 1619.5,213.2 1620.8,210.6 1622.1,215.9 1623.4,212.3 1624.7,209.9 1626.0,211.1 1627.3,207.2 1628.6,210.4 1629.9,212.2 1631.2,210.9 1632.5,209.6 1633.8,210.0 1635.1,210.4 1636.4,211.1 1637.7,212.5 1639.0,211.7 1640.3,209.9 1641.6,209.7 1642.9,213.5 1644.2,213.3 1645.5,216.8 1646.8,212.0 1648.1,210.8 1649.4,212.0 1650.7,207.4 1652.0,210.3 1653.3,210.2 1654.6,213.3 1655.9,211.5 1657.2,207.7 1658.5,211.0 1659.8,209.1 1661.1,209.6 1662.4,208.3 1663.7,212.3 1665.0,211.5 1666.3,214.6 1667.6,209.6 1668.9,206.7 1670.2,209.1 1671.5,211.6 1672.8,207.5 1674.1,212.9 1675.4,211.0 1676.7,213.4 1678.0,208.1 1679.3,212.9 1680.6,208.7 1681.9,207.7 1683.2,211.6 1684.5,210.9 1685.8,212.1 1687.1,205.6 1688.4,208.4 1689.7,209.7 1691.0,208.2 1692.3,207.7 1693.6,212.5 1694.9,210.5 1696.2,211.1 1697.5,209.8 1698.8,212.7 1700.1,215.3 1701.4,207.9 1702.7,212.7 1704.0,211.6 1705.3,214.7 1706.6,211.8 1707.9,215.1 1709.2,213.7 1710.5,213.9 1711.8,208.1 1713.1,211.6 1714.4,209.0 1715.7,213.6 1717.0,209.1 1718.3,212.5 1719.6,217.4 1720.9,217.0 1722.2,221.8 1723.5,229.3 1724.8,234.4 1726.1,229.3 1727.4,228.1 1728.7,233.1 1730.0,227.9 1731.3,227.0 1732.6,235.7 1733.9,232.2 1735.2,234.1 1736.5,238.0 1737.8,235.0 1739.1,229.0 1740.4,232.1 1741.7,232.6 1743.0,235.0 1744.3,236.9 1745.6,234.6 1746.9,228.3 1748.2,236.0 1749.5,227.8 1750.8,230.2 1752.1,227.9 1753.4,235.0 1754.7,229.1 1756.0,239.9 1757.3,234.5 1758.6,227.3 1759.9,231.2 1761.2,237.1 1762.5,230.6 1763.8,226.9 1765.1,224.3 1766.4,230.8 1767.7,228.9 1769.0,233.5 1770.3,229.5 1771.6,223.9 1772.9,236.4 1774.2,228.6 1775.5,227.1 1776.8,223.8 1778.1,232.6 1779.4,221.1 1780.7,225.5 1782.0,222.4 1783.3,227.9 1784.6,227.2 1785.9,222.3 1787.2,216.0 1788.5,224.4 1789.8,223.1 1791.1,226.8 1792.4,227.2 1793.7,219.3 1795.0,222.3 1796.3,226.8 1797.6,226.8 1798.9,220.4 1800.2,226.1 1801.5,219.5 1802.8,220.2 1804.1,217.2 1805.4,219.3 1806.7,217.6 1808.0,221.0 1809.3,221.1 1810.6,218.2 1811.9,217.1 1813.2,217.1 1814.5,218.2 1815.8,217.4 1817.1,221.8 1818.4,226.0 1819.7,219.5 1821.0,211.1 1822.3,219.2 1823.6,210.6 1824.9,212.6 1826.2,215.3 1827.5,217.2 1828.8,223.3 1830.1,216.3 1831.4,216.9 1832.7,214.9 1834.0,220.2 1835.3,215.3 1836.6,214.8 1837.9,215.1 1839.2,217.2 1840.5,209.3 1841.8,212.3 1843.1,209.4 1844.4,220.9 1845.4,213.0" fill="none" stroke="#f2f2f8" stroke-width="1.5" stroke-linejoin="round"/>
<text x="817.5" y="87.7" font-size="16.2" text-anchor="end">40.0</text>
<text x="817.5" y="125.5" font-size="16.2" text-anchor="end">20.0</text>
<text x="817.5" y="163.2" font-size="16.2" text-anchor="end">0.0</text>
<text x="817.5" y="201.0" font-size="16.2" text-anchor="end">-20.0</text>
<text x="817.5" y="238.7" font-size="16.2" text-anchor="end">-40.0</text>
<text x="817.5" y="276.5" font-size="16.2" text-anchor="end">-60.0</text>
<text x="912.5" y="290.3" font-size="16.2" text-anchor="middle">207.2</text>
<text x="1011.3" y="290.3" font-size="16.2" text-anchor="middle">207.4</text>
<text x="1110.1" y="290.3" font-size="16.2" text-anchor="middle">207.6</text>
<text x="1208.8" y="290.3" font-size="16.2" text-anchor="middle">207.8</text>
<text x="1307.6" y="290.3" font-size="16.2" text-anchor="middle">208</text>
<text x="1406.4" y="290.3" font-size="16.2" text-anchor="middle">208.2</text>
<text x="1505.2" y="290.3" font-size="16.2" text-anchor="middle">208.4</text>
<text x="1604.0" y="290.3" font-size="16.2" text-anchor="middle">208.6</text>
<text x="1702.7" y="290.3" font-size="16.2" text-anchor="middle">208.8</text>
<text x="1801.5" y="290.3" font-size="16.2" text-anchor="middle">209</text>
<text x="1338.5" y="317.3" font-size="19.8" text-anchor="middle">Frequency (MHz)</text>
<text transform="translate(751.2 177) rotate(-90)" font-size="20.35" text-anchor="middle">Magnitude (dB)</text>
</svg>
</section>
<div class="b" style="left:0.00px;top:334.00px;width:1866.00px;height:6.00px;background:linear-gradient(#6a6a6a,#8a8a8a 45%,#868686)"></div>
<section class="p" style="left:0;top:340px;width:1866px;height:50px;background:#232323">
<div class="b" style="left:170.70px;top:0.00px;width:1.50px;height:50.00px;background:#e6e6e6"></div>
<div class="b" style="left:172.40px;top:0.00px;width:99.00px;height:50.00px;background:#b01a1a"></div>
<div class="b" style="left:271.40px;top:0.00px;width:399.60px;height:50.00px;background:#323232"></div>
<div class="b" style="left:671.00px;top:0.00px;width:3.40px;height:50.00px;background:#f2f2f2"></div>
<span class="t" style="left:12.42px;top:19.00px;font-size:20.25px;transform:scaleX(0.9589);font-style:italic">DAB+</span>
<div class="b" style="left:83.00px;top:13.00px;width:75.00px;height:28.00px;background:transparent;border:1px solid #6a6a6a;border-radius:3px;box-sizing:border-box"></div>
<span class="t" style="left:85.28px;top:19.00px;font-size:15.50px;transform:scaleX(1.0344)">9D</span>
<svg style="left:131px;top:23px" width="14" height="8" viewBox="0 0 14 8"><path d="M0.8 0.4H13.2L7 7.6Z" fill="#fff"/></svg>
<span class="t" style="left:189.96px;top:18.00px;font-size:19.50px;transform:scaleX(0.9841);color:#f26a6a">EId: 11A3</span>
<span class="t" style="left:297.45px;top:18.00px;font-size:19.50px;transform:scaleX(0.9929);color:#f4f43c">Lübeck K9D</span>
<span class="t" style="left:425.96px;top:17.00px;font-size:20.00px;transform:scaleX(1.0364)">2020-11-09</span>
<span class="t" style="left:540.07px;top:17.00px;font-size:20.00px;transform:scaleX(0.9519)">10:41:57 Z</span>
<div class="b" style="left:687.50px;top:13.00px;width:30.50px;height:27.50px;background:transparent;border:1px solid #767676;border-radius:3px;box-sizing:border-box"></div>
<svg style="left:696px;top:23px" width="13" height="8" viewBox="0 0 13 8"><path d="M0.5 0.4H12.5L6.5 7.6Z" fill="#fff"/></svg>
<div class="b" style="left:748.60px;top:13.60px;width:27.80px;height:27.80px;background:#1d5e9b;border-radius:50%"></div>
<div class="b" style="left:756.00px;top:21.00px;width:13.00px;height:13.00px;background:#ff0a0a;border-radius:50%"></div>
<div class="b" style="left:792.20px;top:13.70px;width:27.60px;height:27.60px;background:#173856;border-radius:50%"></div>
<div class="b" style="left:800.00px;top:20.50px;width:12.00px;height:14.00px;background:#0c0c0c"></div>
<span class="t" style="left:855.14px;top:18.00px;font-size:19.75px;transform:scaleX(0.9716)">SId: 1888</span>
<span class="t" style="left:973.31px;top:9.00px;font-size:28.75px;transform:scaleX(0.9103);color:#ffff1e">NORDSEEWELLE</span>
<span class="t" style="left:1228.01px;top:18.00px;font-size:19.75px;transform:scaleX(1.0067)">72 kbps</span>
<span class="t" style="left:1309.16px;top:18.00px;font-size:19.75px;transform:scaleX(0.9137)">EEP 2-A</span>
<svg style="left:1416px;top:8px" width="28" height="36" viewBox="1416 348 28 36" fill="none" stroke="#f4f4f4" stroke-width="2" stroke-linejoin="miter"><path d="M1420.3 359h7.1v14.1h-7.1z"/><path d="M1427.4 359L1439.3 351V381.2L1427.4 373.1"/></svg>
<div class="b" style="left:1839.00px;top:11.00px;width:40.00px;height:28.00px;background:#1f2228;border:1px solid #8c8c8c;border-radius:3.5px;box-sizing:border-box"></div>
<span class="t" style="left:1841.17px;top:17.00px;font-size:15.50px;transform:scaleX(0.9896)">DAB+</span>
</section>
<div class="b" style="left:0.00px;top:389.00px;width:1866.00px;height:1.70px;background:linear-gradient(90deg,#c4c6cc 0%,#c4c6cc 50%,#aebccb 100%)"></div>
<section class="p" style="left:0;top:391px;width:243.7px;height:578px;background:#1b5885">
<div class="b" style="left:0.00px;top:0.00px;width:243.70px;height:42.50px;background:#0f2f55"></div>
<span class="t" style="left:5.49px;top:11.00px;font-size:23.25px;transform:scaleX(0.9712);color:#ffff1e">NORDSEEWELLE</span>
<div class="b" style="left:1.40px;top:139.20px;width:165.30px;height:30.60px;background:#206396;border:1px solid #3289c9;box-sizing:border-box"></div>
<span class="t" style="left:8.50px;top:51.00px;font-size:20.25px;transform:scaleX(0.8898)">ANTENNE-SYLT</span>
<span class="t" style="left:6.99px;top:83.00px;font-size:20.25px;transform:scaleX(0.9313)">HAMBURG ZWEI</span>
<span class="t" style="left:6.94px;top:114.00px;font-size:20.25px;transform:scaleX(0.9655)">Luebeck FM</span>
<span class="t" style="left:7.10px;top:146.00px;font-size:20.25px;transform:scaleX(0.8656)">NORDSEEWELLE</span>
<span class="t" style="left:6.89px;top:177.00px;font-size:20.25px;transform:scaleX(0.9963)">Radio Hamburg</span>
<span class="t" style="left:7.08px;top:209.00px;font-size:20.25px;transform:scaleX(0.8774)">RADIO LUEBECK</span>
<span class="t" style="left:7.64px;top:241.00px;font-size:20.25px;transform:scaleX(0.9449)">Schlager RadioB2</span>
</section>
<div class="b" style="left:243.70px;top:391.00px;width:6.60px;height:578.00px;background:#f1f1f1"></div>
<section class="p" style="left:250.3px;top:391px;width:225.2px;height:578px;background:#1b5885">
<div class="b" style="left:0.00px;top:0.00px;width:225.20px;height:42.50px;background:#0f2f55"></div>
<span class="t" style="left:5.29px;top:11.00px;font-size:24.75px;transform:scaleX(1.0851)">Service Quality</span>
<span class="t" style="left:11.96px;top:65.00px;font-size:17.25px;transform:scaleX(0.9511)">SNR (dB)</span>
<div class="b" style="left:162.70px;top:56.00px;width:49.50px;height:31.00px;background:#8a8a8a"></div>
<div class="b" style="left:162.70px;top:56.00px;width:9.00px;height:31.00px;background:#ff0000"></div>
<span class="t" style="left:177.08px;top:64.00px;font-size:15.75px;transform:scaleX(0.9300)">6.9</span>
<span class="t" style="left:11.36px;top:103.00px;font-size:17.25px;transform:scaleX(0.9745)">FIC (ok %)</span>
<div class="b" style="left:162.70px;top:94.40px;width:49.50px;height:31.00px;background:#8a8a8a"></div>
<div class="b" style="left:162.70px;top:94.40px;width:49.50px;height:31.00px;background:#008000"></div>
<span class="t" style="left:174.81px;top:103.00px;font-size:15.75px;transform:scaleX(0.9300)">100</span>
<span class="t" style="left:11.38px;top:141.00px;font-size:17.25px;transform:scaleX(0.9574)">RS (ok %)</span>
<div class="b" style="left:162.70px;top:132.80px;width:49.50px;height:31.00px;background:#8a8a8a"></div>
<div class="b" style="left:162.70px;top:132.80px;width:38.00px;height:31.00px;background:#008000"></div>
<span class="t" style="left:179.10px;top:141.00px;font-size:15.75px;transform:scaleX(0.9300)">76</span>
<span class="t" style="left:11.26px;top:180.00px;font-size:17.25px;transform:scaleX(1.0444)">Null Symbol</span>
<div class="b" style="left:162.70px;top:171.20px;width:49.50px;height:31.00px;background:#8a8a8a"></div>
<div class="b" style="left:162.70px;top:171.20px;width:49.50px;height:31.00px;background:#008000"></div>
<span class="t" style="left:11.93px;top:218.00px;font-size:17.25px;transform:scaleX(0.9982)">SymbolTime (ms)</span>
<div class="b" style="left:162.70px;top:209.60px;width:49.50px;height:31.00px;background:#8a8a8a"></div>
<div class="b" style="left:162.70px;top:209.60px;width:9.00px;height:31.00px;background:#008000"></div>
<span class="t" style="left:173.06px;top:218.00px;font-size:15.75px;transform:scaleX(0.9300)">0.30</span>
<span class="t" style="left:11.34px;top:257.00px;font-size:17.25px;transform:scaleX(0.9883)">FrameTime (ms)</span>
<div class="b" style="left:162.70px;top:248.00px;width:49.50px;height:31.00px;background:#8a8a8a"></div>
<div class="b" style="left:162.70px;top:248.00px;width:31.00px;height:31.00px;background:#008000"></div>
<span class="t" style="left:172.98px;top:256.00px;font-size:15.75px;transform:scaleX(0.9300)">96.0</span>
</section>
<div class="b" style="left:475.30px;top:391.00px;width:6.00px;height:578.00px;background:linear-gradient(90deg,#123a66 0,#123a66 0.6px,#c3cee3 0.6px,#c6d1e6 4.9px,#0d2f58 4.9px,#0d2f58 6px)"></div>
<section class="p" style="left:480.5px;top:391px;width:494.7px;height:578px;background:#1b5885">
<div class="b" style="left:0.00px;top:0.00px;width:494.70px;height:43.00px;background:#0f2f55"></div>
<div class="tab" style="left:9.5px;top:8.3px;width:74.0px;height:34.7px"></div>
<span class="t" style="left:24.59px;top:18.00px;font-size:21.25px;transform:scaleX(0.9499);color:#d2d2d2">Sync</span>
<div class="tab" style="left:84.5px;top:8.3px;width:54.5px;height:34.7px;background:#1b5885"></div>
<span class="t" style="left:101.59px;top:18.00px;font-size:21.25px;transform:scaleX(0.9590)">TII</span>
<div class="tab" style="left:139.8px;top:8.3px;width:87.7px;height:34.7px"></div>
<span class="t" style="left:156.50px;top:18.00px;font-size:21.25px;transform:scaleX(1.0198);color:#d2d2d2">Audio</span>
<div class="tab" style="left:228.7px;top:8.3px;width:70.8px;height:34.7px"></div>
<span class="t" style="left:245.00px;top:18.00px;font-size:21.25px;transform:scaleX(0.9202);color:#d2d2d2">AAC</span>
<div class="tab" style="left:300.7px;top:8.3px;width:106.6px;height:34.7px"></div>
<span class="t" style="left:316.21px;top:18.00px;font-size:21.25px;transform:scaleX(1.0349);color:#d2d2d2">Options</span>
<div class="b" style="left:0.70px;top:43.00px;width:6.30px;height:535.00px;background:rgba(70,95,120,.11)"></div>
<div class="b" style="left:43.20px;top:55.30px;width:12.00px;height:12.00px;background:#ff0a10;border-radius:50%"></div>
<div class="b" style="left:80.00px;top:56.00px;width:10.60px;height:11.20px;background:#0e2c48"></div>
<div class="b" style="left:18.10px;top:78.80px;width:311.00px;height:1.30px;background:#86b6da"></div>
<span class="t" style="left:17.18px;top:103.00px;font-size:19.00px;transform:scaleX(1.0032)">Pattern</span>
<span class="t" style="left:101.72px;top:103.00px;font-size:19.00px;transform:scaleX(1.0379)">MainId</span>
<span class="t" style="left:184.46px;top:103.00px;font-size:19.00px;transform:scaleX(0.9875)">SubId</span>
<span class="t" style="left:257.44px;top:103.00px;font-size:19.00px;transform:scaleX(1.0054)">Strength</span>
<div class="b" style="left:18.50px;top:124.30px;width:310.50px;height:1.20px;background:#9dbbd6"></div>
<span class="t" style="left:20.09px;top:143.00px;font-size:17.25px;transform:scaleX(1.0152)">0x96</span>
<span class="t" style="left:104.35px;top:143.00px;font-size:17.25px;transform:scaleX(1.0207)">41</span>
<span class="t" style="left:187.81px;top:143.00px;font-size:17.25px">1</span>
<span class="t" style="left:259.91px;top:143.00px;font-size:17.25px;transform:scaleX(0.9841)">0.94</span>
<div class="b" style="left:340.80px;top:43.00px;width:1.20px;height:535.00px;background:#3572a3"></div>
<span class="t" style="left:347.76px;top:67.00px;font-size:18.25px;transform:scaleX(0.9415)">Threshold</span>
<svg style="left:377.9px;top:105.0px" width="8" height="146" viewBox="0 0 8 146"><path d="M4 0 L5.6 8 V144 H2.4 V8 Z" fill="#cfdcec"/></svg>
<div class="b" style="left:373.90px;top:238.00px;width:16.00px;height:16.00px;background:radial-gradient(circle at 50% 22%,#dedede 0%,#b6b6b6 30%,#808080 58%,#4a4a4a 84%,#343434 100%);border-radius:50%"></div>
<span class="t" style="left:364.52px;top:266.00px;font-size:17.25px;transform:scaleX(0.9636)">0.02</span>
</section>
<div class="b" style="left:975.20px;top:391.00px;width:5.80px;height:578.00px;background:#f1f4f8"></div>
<section class="p" style="left:981px;top:391px;width:885px;height:273px;background:#000">
<div class="b" style="left:0.00px;top:0.00px;width:885.00px;height:23.80px;background:#0f2f55"></div>
<span class="t" style="left:336.41px;top:3.00px;font-size:17.25px;transform:scaleX(1.0329)">Channel Impulse Response (CIR)</span>
<div class="b" style="left:12.50px;top:38.50px;width:17.00px;height:17.00px;background:#e2e2e2;border-radius:50%"></div>
<span class="t" style="left:33.37px;top:40.00px;font-size:15.00px;transform:scaleX(0.9409)">Freeze</span>
<div class="b" style="left:101.50px;top:38.50px;width:17.00px;height:17.00px;background:#e2e2e2;border-radius:50%"></div>
<span class="t" style="left:122.45px;top:40.00px;font-size:15.00px;transform:scaleX(1.0018)">Gradient</span>
<span class="t" style="left:18.52px;top:91.00px;font-size:15.00px;transform:scaleX(1.0043)">Smoothing Level</span>
<div class="b" style="left:20.80px;top:115.50px;width:1.00px;height:4.00px;background:#bdbdbd"></div><div class="b" style="left:37.16px;top:115.50px;width:1.00px;height:4.00px;background:#bdbdbd"></div><div class="b" style="left:53.52px;top:115.50px;width:1.00px;height:4.00px;background:#bdbdbd"></div><div class="b" style="left:69.88px;top:115.50px;width:1.00px;height:4.00px;background:#bdbdbd"></div><div class="b" style="left:86.24px;top:115.50px;width:1.00px;height:4.00px;background:#bdbdbd"></div><div class="b" style="left:102.60px;top:115.50px;width:1.00px;height:4.00px;background:#bdbdbd"></div><div class="b" style="left:118.96px;top:115.50px;width:1.00px;height:4.00px;background:#bdbdbd"></div><div class="b" style="left:135.32px;top:115.50px;width:1.00px;height:4.00px;background:#bdbdbd"></div><div class="b" style="left:151.68px;top:115.50px;width:1.00px;height:4.00px;background:#bdbdbd"></div><div class="b" style="left:168.04px;top:115.50px;width:1.00px;height:4.00px;background:#bdbdbd"></div><div class="b" style="left:184.40px;top:115.50px;width:1.00px;height:4.00px;background:#bdbdbd"></div><div class="b" style="left:13.00px;top:127.05px;width:172.50px;height:2.90px;background:#e4e4e4;border-radius:2px"></div><div class="b thumb" style="left:79.00px;top:120.50px;width:16.00px;height:16.00px;background:radial-gradient(circle at 50% 22%,#dedede 0%,#b6b6b6 30%,#808080 58%,#4a4a4a 84%,#343434 100%);border-radius:50%"></div>
<span class="t" style="left:18.75px;top:159.00px;font-size:15.00px;transform:scaleX(1.0048)">Zoom X</span>
<div class="b" style="left:13.00px;top:189.05px;width:172.50px;height:2.90px;background:#e4e4e4;border-radius:2px"></div><div class="b thumb" style="left:13.00px;top:182.50px;width:16.00px;height:16.00px;background:radial-gradient(circle at 50% 22%,#dedede 0%,#b6b6b6 30%,#808080 58%,#4a4a4a 84%,#343434 100%);border-radius:50%"></div>
<span class="t" style="left:18.75px;top:221.00px;font-size:15.00px;transform:scaleX(1.0107)">Zoom Y</span>
<div class="b" style="left:13.00px;top:251.05px;width:172.50px;height:2.90px;background:#e4e4e4;border-radius:2px"></div><div class="b thumb" style="left:13.00px;top:244.50px;width:16.00px;height:16.00px;background:radial-gradient(circle at 50% 22%,#dedede 0%,#b6b6b6 30%,#808080 58%,#4a4a4a 84%,#343434 100%);border-radius:50%"></div>
<div class="b" style="left:193.20px;top:26.50px;width:5.80px;height:170.00px;background:#a9a9a9;border-radius:3px"></div>
<svg style="left:209px;top:24px" width="676" height="248" viewBox="1190 415 676 248">
<rect x="1305.4" y="435.0" width="139.0" height="175.3" fill="#404040"/>
<path d="M1305.4 470.5H1870M1305.4 505.5H1870M1305.4 540.5H1870M1305.4 576.5H1870M1330.5 435.0V610.3M1368.5 435.0V610.3M1406.5 435.0V610.3M1444.5 435.0V610.3M1482.5 435.0V610.3M1520.5 435.0V610.3M1557.5 435.0V610.3M1595.5 435.0V610.3M1633.5 435.0V610.3M1671.5 435.0V610.3M1709.5 435.0V610.3M1747.5 435.0V610.3M1784.5 435.0V610.3M1822.5 435.0V610.3M1860.5 435.0V610.3" stroke="#8f8f8f" stroke-width="1" fill="none"/>
<path d="M1305.4 435.0H1870M1305.4 435.0V610.3H1870" stroke="#8c8c8c" stroke-width="1.6" fill="none"/>
<path d="M1444.4 435.0V610.3" stroke="#e8e84a" stroke-width="1" stroke-dasharray="1.5 1.2"/>
<polyline points="1305.4,597.2 1306.3,599.9 1307.2,595.5 1308.2,604.5 1309.1,589.5 1310.0,602.3 1310.9,610.0 1311.9,603.3 1312.8,610.0 1313.7,601.1 1314.6,605.1 1315.6,601.4 1316.5,605.5 1317.4,607.7 1318.3,599.7 1319.3,591.4 1320.2,589.0 1321.1,591.0 1322.0,608.6 1323.0,604.0 1323.9,607.8 1324.8,604.6 1325.7,598.5 1326.7,601.2 1327.6,609.3 1328.5,610.0 1329.4,608.5 1330.4,610.0 1331.3,610.0 1332.2,605.9 1333.1,610.0 1334.1,610.0 1335.0,610.0 1335.9,609.4 1336.8,604.0 1337.8,598.3 1338.7,609.3 1339.6,610.0 1340.5,610.0 1341.5,609.3 1342.4,610.0 1343.3,610.0 1344.2,608.5 1345.2,602.2 1346.1,610.0 1347.0,610.0 1347.9,603.9 1348.9,606.2 1349.8,610.0 1350.7,610.0 1351.6,603.9 1352.6,604.4 1353.5,592.2 1354.4,601.2 1355.3,602.3 1356.3,607.2 1357.2,592.5 1358.1,610.0 1359.0,604.3 1360.0,604.6 1360.9,610.0 1361.8,610.0 1362.7,610.0 1363.7,599.0 1364.6,610.0 1365.5,607.1 1366.4,593.0 1367.4,593.0 1368.3,598.6 1369.2,604.2 1370.1,601.8 1371.1,606.7 1372.0,599.2 1372.9,601.2 1373.8,602.6 1374.8,595.2 1375.7,602.2 1376.6,610.0 1377.5,593.4 1378.5,609.6 1379.4,599.5 1380.3,607.2 1381.2,603.1 1382.2,591.0 1383.1,593.3 1384.0,593.9 1384.9,603.3 1385.9,601.5 1386.8,601.3 1387.7,598.5 1388.6,596.1 1389.6,591.7 1390.5,605.4 1391.4,610.0 1392.3,602.5 1393.3,598.4 1394.2,597.9 1395.1,607.1 1396.0,609.5 1397.0,602.8 1397.9,595.6 1398.8,586.9 1399.7,596.7 1400.7,601.9 1401.6,601.0 1402.5,601.4 1403.4,597.9 1404.4,599.6 1405.3,602.4 1406.2,593.9 1407.1,602.3 1408.1,598.4 1409.0,607.6 1409.9,600.3 1410.8,592.3 1411.8,603.9 1412.7,598.9 1413.6,604.3 1414.5,593.3 1415.5,602.4 1416.4,601.6 1417.3,603.2 1418.2,602.1 1419.2,595.5 1420.1,604.9 1421.0,601.8 1421.9,600.6 1422.9,599.5 1423.8,603.6 1424.7,595.4 1425.6,590.7 1426.6,591.4 1427.5,597.4 1428.4,598.1 1429.3,604.2 1430.3,599.6 1431.2,605.0 1432.1,594.6 1433.0,589.8 1434.0,595.4 1434.9,595.2 1435.8,601.7 1436.7,600.2 1437.7,604.2 1438.6,599.7 1439.5,593.4 1440.4,585.5 1441.4,590.7 1442.3,575.6 1443.2,560.9 1444.4,528.6 1446.0,565.9 1446.9,576.6 1447.8,582.6 1448.8,589.4 1449.7,593.4 1450.6,593.9 1451.5,596.8 1452.5,600.6 1453.4,595.8 1454.3,593.9 1455.2,595.5 1456.2,602.1 1457.1,601.4 1458.0,601.1 1458.9,602.2 1459.9,604.4 1460.8,604.0 1461.7,605.1 1462.6,606.2 1463.6,603.7 1464.5,600.0 1465.4,607.1 1466.3,603.2 1467.3,604.5 1468.2,604.9 1469.1,608.5 1470.0,606.2 1471.0,598.5 1471.9,598.4 1472.8,602.3 1473.7,602.8 1474.7,602.0 1475.6,596.9 1476.5,590.6 1477.4,609.0 1478.4,610.0 1479.3,610.0 1480.2,610.0 1481.1,610.0 1482.1,603.9 1483.0,595.0 1483.9,607.2 1484.8,599.6 1485.8,595.7 1486.7,589.0 1487.6,591.3 1488.5,599.4 1489.5,602.1 1490.4,597.1 1491.3,597.7 1492.2,600.4 1493.2,609.5 1494.1,592.4 1495.0,603.3 1495.9,593.7 1496.9,600.3 1497.8,601.9 1498.7,603.3 1499.6,599.9 1500.6,595.7 1501.5,600.6 1502.4,597.3 1503.3,599.9 1504.3,606.7 1505.2,593.6 1506.1,586.5 1507.0,586.6 1508.0,599.0 1508.9,593.8 1509.8,606.2 1510.7,598.5 1511.7,601.1 1512.6,588.9 1513.5,588.4 1514.4,588.2 1515.4,589.0 1516.3,603.2 1517.2,596.4 1518.1,596.9 1519.1,606.4 1520.0,599.1 1520.9,592.8 1521.8,603.5 1522.8,596.7 1523.7,593.5 1524.6,590.5 1525.5,592.7 1526.5,603.1 1527.4,600.2 1528.3,602.7 1529.2,606.9 1530.2,610.0 1531.1,608.9 1532.0,602.6 1532.9,594.2 1533.9,605.4 1534.8,603.3 1535.7,607.5 1536.6,606.9 1537.6,608.5 1538.5,596.0 1539.4,598.1 1540.3,600.3 1541.3,596.4 1542.2,605.6 1543.1,604.7 1544.0,608.5 1545.0,602.5 1545.9,610.0 1546.8,610.0 1547.7,610.0 1548.7,602.6 1549.6,609.9 1550.5,594.3 1551.4,600.6 1552.4,604.0 1553.3,595.4 1554.2,593.9 1555.1,595.6 1556.1,596.7 1557.0,593.4 1557.9,599.1 1558.8,598.9 1559.8,600.7 1560.7,605.3 1561.6,596.8 1562.5,602.0 1563.5,604.8 1564.4,594.5 1565.3,598.8 1566.2,590.8 1567.2,594.4 1568.1,594.1 1569.0,610.0 1569.9,602.8 1570.9,601.0 1571.8,604.6 1572.7,601.1 1573.6,607.0 1574.6,599.1 1575.5,598.0 1576.4,605.8 1577.3,607.0 1578.3,598.4 1579.2,601.3 1580.1,594.5 1581.0,590.8 1582.0,599.5 1582.9,588.1 1583.8,584.1 1584.7,596.7 1585.7,585.0 1586.6,602.2 1587.5,604.1 1588.4,598.4 1589.4,598.7 1590.3,597.3 1591.2,598.2 1592.1,607.8 1593.1,604.1 1594.0,596.4 1594.9,596.6 1595.8,605.0 1596.8,604.6 1597.7,607.3 1598.6,598.2 1599.5,595.6 1600.5,591.6 1601.4,608.5 1602.3,596.9 1603.2,600.0 1604.2,601.8 1605.1,608.0 1606.0,610.0 1606.9,603.9 1607.9,599.3 1608.8,607.2 1609.7,605.8 1610.6,596.4 1611.6,605.8 1612.5,599.5 1613.4,591.1 1614.3,598.5 1615.3,598.7 1616.2,595.8 1617.1,602.0 1618.0,602.8 1619.0,602.0 1619.9,601.1 1620.8,601.4 1621.7,610.0 1622.7,597.3 1623.6,601.0 1624.5,598.7 1625.4,597.8 1626.4,596.1 1627.3,593.2 1628.2,591.2 1629.1,584.0 1630.1,594.4 1631.0,589.6 1631.9,595.7 1632.8,584.0 1633.8,594.0 1634.7,597.4 1635.6,610.0 1636.5,610.0 1637.5,610.0 1638.4,608.3 1639.3,596.8 1640.2,600.4 1641.2,601.1 1642.1,603.7 1643.0,606.8 1643.9,605.7 1644.9,609.7 1645.8,608.9 1646.7,610.0 1647.6,602.8 1648.6,610.0 1649.5,595.5 1650.4,597.6 1651.3,610.0 1652.3,605.6 1653.2,594.0 1654.1,596.9 1655.0,610.0 1656.0,610.0 1656.9,599.0 1657.8,607.4 1658.7,601.3 1659.7,601.1 1660.6,608.4 1661.5,590.9 1662.4,589.1 1663.4,603.6 1664.3,610.0 1665.2,608.7 1666.1,599.2 1667.1,599.4 1668.0,593.6 1668.9,605.3 1669.8,601.0 1670.8,597.7 1671.7,595.5 1672.6,597.0 1673.5,590.1 1674.5,600.2 1675.4,603.4 1676.3,610.0 1677.2,599.8 1678.2,601.7 1679.1,610.0 1680.0,598.1 1680.9,610.0 1681.9,604.1 1682.8,600.0 1683.7,593.4 1684.6,610.0 1685.6,600.3 1686.5,594.6 1687.4,592.5 1688.3,600.7 1689.3,600.5 1690.2,607.7 1691.1,607.7 1692.0,606.6 1693.0,598.8 1693.9,597.0 1694.8,597.4 1695.7,596.7 1696.7,595.7 1697.6,603.6 1698.5,598.3 1699.4,600.6 1700.4,600.6 1701.3,606.4 1702.2,593.7 1703.1,600.6 1704.1,589.3 1705.0,597.4 1705.9,594.3 1706.8,610.0 1707.8,599.0 1708.7,600.3 1709.6,595.4 1710.5,608.1 1711.5,598.7 1712.4,606.3 1713.3,601.2 1714.2,609.3 1715.2,597.3 1716.1,608.9 1717.0,610.0 1717.9,603.6 1718.9,598.8 1719.8,605.7 1720.7,605.7 1721.6,598.1 1722.6,595.0 1723.5,606.0 1724.4,610.0 1725.3,610.0 1726.3,610.0 1727.2,606.2 1728.1,610.0 1729.0,598.3 1730.0,598.1 1730.9,599.3 1731.8,610.0 1732.7,610.0 1733.7,604.1 1734.6,606.0 1735.5,610.0 1736.4,599.5 1737.4,594.8 1738.3,588.7 1739.2,600.2 1740.1,601.1 1741.1,607.4 1742.0,604.4 1742.9,600.2 1743.8,598.6 1744.8,599.3 1745.7,598.3 1746.6,603.4 1747.5,593.3 1748.5,595.1 1749.4,595.8 1750.3,584.0 1751.2,599.9 1752.2,586.5 1753.1,588.6 1754.0,589.6 1754.9,587.9 1755.9,601.3 1756.8,601.5 1757.7,592.2 1758.6,590.1 1759.6,589.1 1760.5,596.8 1761.4,595.5 1762.3,606.3 1763.3,599.6 1764.2,600.0 1765.1,605.6 1766.0,610.0 1767.0,593.4 1767.9,584.6 1768.8,600.0 1769.7,598.5 1770.7,606.8 1771.6,609.1 1772.5,607.7 1773.4,605.1 1774.4,606.5 1775.3,610.0 1776.2,596.2 1777.1,601.3 1778.1,610.0 1779.0,601.2 1779.9,610.0 1780.8,597.0 1781.8,598.1 1782.7,610.0 1783.6,607.2 1784.5,597.5 1785.5,610.0 1786.4,592.8 1787.3,603.9 1788.2,610.0 1789.2,606.2 1790.1,607.7 1791.0,595.2 1791.9,592.1 1792.9,586.1 1793.8,594.0 1794.7,599.3 1795.6,598.8 1796.6,598.0 1797.5,590.5 1798.4,606.0 1799.3,598.1 1800.3,608.2 1801.2,598.1 1802.1,610.0 1803.0,606.0 1804.0,607.8 1804.9,603.0 1805.8,601.8 1806.7,610.0 1807.7,608.2 1808.6,601.1 1809.5,610.0 1810.4,610.0 1811.4,601.8 1812.3,600.2 1813.2,609.1 1814.1,602.0 1815.1,599.0 1816.0,608.2 1816.9,591.5 1817.8,597.8 1818.8,597.9 1819.7,597.2 1820.6,593.4 1821.5,589.0 1822.5,602.2 1823.4,593.5 1824.3,602.2 1825.2,605.7 1826.2,599.2 1827.1,591.6 1828.0,597.0 1828.9,605.1 1829.9,596.9 1830.8,602.3 1831.7,610.0 1832.6,606.1 1833.6,605.6 1834.5,602.4 1835.4,607.1 1836.3,599.9 1837.3,598.4 1838.2,610.0 1839.1,609.6 1840.0,610.0 1841.0,610.0 1841.9,604.6 1842.8,600.5 1843.7,605.4 1844.7,595.7 1845.6,604.9 1846.5,595.1 1847.4,606.5 1848.4,605.1 1849.3,598.1 1850.2,601.8 1851.1,610.0 1852.1,606.1 1853.0,597.1 1853.9,598.7 1854.8,590.9 1855.8,600.5 1856.7,610.0 1857.6,607.1 1858.5,602.4 1859.5,597.6 1860.4,610.0 1861.3,603.7 1862.2,590.9 1863.2,598.6 1864.1,608.9 1865.0,610.0 1865.9,610.0 1866.9,610.0 1867.8,609.7 1868.7,610.0 1869.6,609.3" fill="none" stroke="#ededed" stroke-width="1.5" stroke-linejoin="round"/>
<circle cx="1444.6" cy="528.6" r="5" fill="#ffee00"/>
<text x="1293.8" y="440.8" font-size="16.2" text-anchor="end">-20.0</text>
<text x="1293.8" y="475.9" font-size="16.2" text-anchor="end">-30.0</text>
<text x="1293.8" y="510.9" font-size="16.2" text-anchor="end">-40.0</text>
<text x="1293.8" y="546.0" font-size="16.2" text-anchor="end">-50.0</text>
<text x="1293.8" y="581.0" font-size="16.2" text-anchor="end">-60.0</text>
<text x="1293.8" y="616.1" font-size="16.2" text-anchor="end">-70.0</text>
<text x="1330.4" y="627.3" font-size="12.2" text-anchor="middle">-60</text>
<text x="1368.2" y="627.3" font-size="12.2" text-anchor="middle">-40</text>
<text x="1406.1" y="627.3" font-size="12.2" text-anchor="middle">-20</text>
<text x="1443.5" y="627.3" font-size="12.2" text-anchor="middle">0</text>
<text x="1481.3" y="627.3" font-size="12.2" text-anchor="middle">20</text>
<text x="1519.2" y="627.3" font-size="12.2" text-anchor="middle">40</text>
<text x="1557.0" y="627.3" font-size="12.2" text-anchor="middle">60</text>
<text x="1594.9" y="627.3" font-size="12.2" text-anchor="middle">80</text>
<text x="1632.7" y="627.3" font-size="12.2" text-anchor="middle">100</text>
<text x="1670.5" y="627.3" font-size="12.2" text-anchor="middle">120</text>
<text x="1708.4" y="627.3" font-size="12.2" text-anchor="middle">140</text>
<text x="1746.2" y="627.3" font-size="12.2" text-anchor="middle">160</text>
<text x="1784.1" y="627.3" font-size="12.2" text-anchor="middle">180</text>
<text x="1821.9" y="627.3" font-size="12.2" text-anchor="middle">200</text>
<text x="1859.7" y="627.3" font-size="12.2" text-anchor="middle">220</text>
<text x="1588.3" y="649" font-size="17" text-anchor="middle">Distance Difference (km)</text>
<text transform="translate(1231.2 523) rotate(-90)" font-size="15.4" font-weight="bold" text-anchor="middle">Magnitude (dB)</text>
</svg>
</section>
<div class="b" style="left:981.00px;top:664.00px;width:885.00px;height:6.80px;background:#898989"></div>
<section class="p" style="left:981px;top:671px;width:885px;height:292.2px;background:#000">
<div class="b" style="left:0.00px;top:-0.20px;width:885.00px;height:25.00px;background:#0f2f55"></div>
<span class="t" style="left:426.15px;top:4.00px;font-size:17.25px;transform:scaleX(1.0199)">TII Carriers</span>
<svg style="left:0;top:25.0px" width="885" height="267" viewBox="981 696 885 267">
<path d="M1096.6 866.5H1863.1M1096.6 828.5H1863.1M1096.6 790.5H1863.1M1096.6 753.5H1863.1M1143.5 715.0V903.0M1218.5 715.0V903.0M1293.5 715.0V903.0M1367.5 715.0V903.0M1442.5 715.0V903.0M1517.5 715.0V903.0M1592.5 715.0V903.0M1666.5 715.0V903.0M1741.5 715.0V903.0M1816.5 715.0V903.0" stroke="#8f8f8f" stroke-width="1" fill="none"/>
<rect x="1096.6" y="715.0" width="766.5" height="188.0" fill="none" stroke="#8c8c8c" stroke-width="1.6"/>
<path d="M1096.6 901.3H1192.9M1767.1 901.3H1863.1" stroke="#c8c8c8" stroke-width="1.3"/>
<path d="M1233.6 715.0V903.0" stroke="#cc2a28" stroke-width="1.4"/>
<path d="M1193.3 718.2V903.0M1336.9 718.2V903.0M1480.4 718.2V903.0M1623.9 718.2V903.0M1767.5 718.2V903.0" stroke="#e6e632" stroke-width="2.5" stroke-linecap="round" stroke-dasharray="0.1 3.9" fill="none"/>
<path d="M1194.2 903.0V812.3" stroke="#f4f470" stroke-width="1.8"/>
<path d="M1248.2 903.0V793.0" stroke="#f2f2f2" stroke-width="1.8"/>
<path d="M1284.0 903.0V763.1" stroke="#f2f2f2" stroke-width="1.8"/>
<path d="M1302.0 903.0V838.0" stroke="#f2f2f2" stroke-width="1.8"/>
<path d="M1338.2 903.0V754.8" stroke="#f4f470" stroke-width="1.8"/>
<path d="M1392.0 903.0V740.0" stroke="#f2f2f2" stroke-width="1.8"/>
<path d="M1404.0 903.0V887.3" stroke="#b4b4b4" stroke-width="1.3"/>
<path d="M1413.0 903.0V897.7" stroke="#b4b4b4" stroke-width="1.3"/>
<path d="M1428.0 903.0V715.0" stroke="#f2f2f2" stroke-width="1.8"/>
<path d="M1445.7 903.0V764.2" stroke="#f2f2f2" stroke-width="1.8"/>
<path d="M1459.4 903.0V892.9" stroke="#b4b4b4" stroke-width="1.3"/>
<path d="M1482.0 903.0V860.8" stroke="#f4f470" stroke-width="1.8"/>
<path d="M1536.0 903.0V760.4" stroke="#f2f2f2" stroke-width="1.8"/>
<path d="M1572.0 903.0V857.0" stroke="#f2f2f2" stroke-width="1.8"/>
<path d="M1590.0 903.0V766.1" stroke="#f2f2f2" stroke-width="1.8"/>
<path d="M1594.3 903.0V885.4" stroke="#b4b4b4" stroke-width="1.3"/>
<path d="M1587.5 903.0V899.6" stroke="#b4b4b4" stroke-width="1.3"/>
<path d="M1625.6 903.0V771.8" stroke="#f4f470" stroke-width="1.8"/>
<path d="M1679.7 903.0V854.3" stroke="#f2f2f2" stroke-width="1.8"/>
<path d="M1715.2 903.0V815.3" stroke="#f2f2f2" stroke-width="1.8"/>
<path d="M1733.0 903.0V766.9" stroke="#f2f2f2" stroke-width="1.8"/>
<path d="M1476.5 903.0V900.5" stroke="#b4b4b4" stroke-width="1.3"/>
<path d="M1287.5 903.0V902.0" stroke="#b4b4b4" stroke-width="1.3"/>
<text x="1084.3" y="720.9" font-size="16.2" text-anchor="end">1.0</text>
<text x="1084.3" y="758.8" font-size="16.2" text-anchor="end">0.8</text>
<text x="1084.3" y="796.6" font-size="16.2" text-anchor="end">0.6</text>
<text x="1084.3" y="834.5" font-size="16.2" text-anchor="end">0.4</text>
<text x="1084.3" y="872.3" font-size="16.2" text-anchor="end">0.2</text>
<text x="1084.3" y="910.2" font-size="16.2" text-anchor="end">0.0</text>
<text x="1143.2" y="923" font-size="16.2" text-anchor="middle">-900</text>
<text x="1218.0" y="923" font-size="16.2" text-anchor="middle">-700</text>
<text x="1292.7" y="923" font-size="16.2" text-anchor="middle">-500</text>
<text x="1367.5" y="923" font-size="16.2" text-anchor="middle">-300</text>
<text x="1442.2" y="923" font-size="16.2" text-anchor="middle">-100</text>
<text x="1517.2" y="923" font-size="16.2" text-anchor="middle">100</text>
<text x="1591.9" y="923" font-size="16.2" text-anchor="middle">300</text>
<text x="1666.7" y="923" font-size="16.2" text-anchor="middle">500</text>
<text x="1741.4" y="923" font-size="16.2" text-anchor="middle">700</text>
<text x="1816.2" y="923" font-size="16.2" text-anchor="middle">900</text>
<text x="1479.6" y="947" font-size="16.6" text-anchor="middle">TII Subcarrier</text>
<text transform="translate(1032.2 809.6) rotate(-90)" font-size="15.2" font-weight="bold" text-anchor="middle">Magnitude</text>
</svg>
</section>
<div class="b" style="left:981.00px;top:963.20px;width:885.00px;height:6.00px;background:#8a8a8a"></div>
</body></html>
